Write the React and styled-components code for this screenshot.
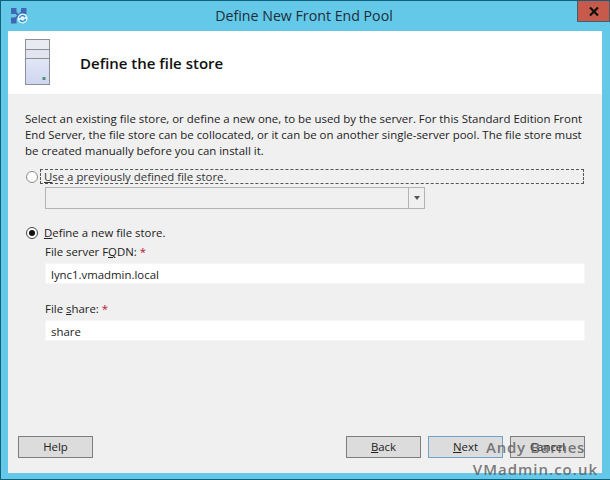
import React from "react";
import styled, { createGlobalStyle } from "styled-components";

const Global = createGlobalStyle`
  html, body { margin: 0; padding: 0; width: 610px; height: 480px; overflow: hidden; background: #64c8e8; }
  * { box-sizing: border-box; }
`;

const Win = styled.div`
  position: relative;
  width: 610px;
  height: 480px;
  background: #64c8e8;
  border: 1px solid #0f5f7d;
  border-right: 0;
  display: flex;
  flex-direction: column;
  font-family: "Open Sans", "Noto Sans", sans-serif;
  font-size: 11.4px;
  color: #222;
`;

const TitleBar = styled.div`
  height: 30px;
  flex: none;
  display: flex;
  align-items: flex-start;
  padding-left: 9px;
`;

const TitleIconBox = styled.div`
  width: 18px;
  height: 17px;
  margin-top: 6px;
  flex: none;
`;

const Title = styled.div`
  flex: 1;
  text-align: center;
  font-size: 14.2px;
  line-height: 30px;
  color: #1c2e38;
  padding-left: 3px;
`;

const Close = styled.div`
  width: 33px;
  height: 21px;
  flex: none;
  background: #c75a4a;
  border: 1px solid #3f5e6e;
  border-top: 0;
  display: flex;
  align-items: center;
  justify-content: center;
`;

const Client = styled.div`
  flex: 1;
  margin: 0 8px 6px 7px;
  display: flex;
  flex-direction: column;
  background: #f0f0f0;
  min-height: 0;
`;

const Header = styled.div`
  height: 63px;
  flex: none;
  background: #fff;
  display: flex;
  align-items: center;
  padding-left: 17px;
`;

const HeaderIcon = styled.div`
  width: 25px;
  height: 46px;
  flex: none;
  margin-top: -2px;
`;

const Heading = styled.h1`
  margin: 0 0 0 30px;
  font-size: 15px;
  font-weight: 600;
  color: #111;
`;

const Body = styled.div`
  flex: 1;
  padding: 17px 18px 0 18px;
  display: flex;
  flex-direction: column;
  min-height: 0;
`;

const Intro = styled.p`
  margin: 0 0 0 -1px;
  line-height: 16px;
  height: 48px;
  white-space: pre;
  font-size: 11.45px;
  color: #222;
`;

const RadioRow = styled.div`
  display: flex;
  align-items: center;
  height: 15px;
  flex: none;
  margin-top: ${(p) => p.$top}px;
`;

const Radio = styled.span`
  width: 12px;
  height: 12px;
  flex: none;
  border-radius: 50%;
  background: #fff;
  border: 1px solid ${(p) => (p.$on ? "#444" : "#8a8a8a")};
  display: flex;
  align-items: center;
  justify-content: center;
  &::after {
    content: "";
    display: ${(p) => (p.$on ? "block" : "none")};
    width: 6px;
    height: 6px;
    border-radius: 50%;
    background: #111;
  }
`;

const RadioLabel = styled.span`
  flex: ${(p) => (p.$focus ? "1" : "none")};
  margin-left: 2px;
  padding-left: 3px;
  line-height: 13px;
  height: 15px;
  border: 1px dashed ${(p) => (p.$focus ? "#555" : "transparent")};
  color: ${(p) => (p.$focus ? "#333" : "#222")};
`;

const Combo = styled.div`
  margin: 3px 0 0 19px;
  width: 380px;
  height: 22px;
  flex: none;
  display: flex;
  border: 1px solid #b4b4b4;
  background: #f0f0f0;
`;

const ComboField = styled.div`
  flex: 1;
`;

const ComboButton = styled.div`
  width: 16px;
  flex: none;
  border-left: 1px solid #b4b4b4;
  display: flex;
  align-items: center;
  justify-content: center;
  &::after {
    content: "";
    border-left: 3.5px solid transparent;
    border-right: 3.5px solid transparent;
    border-top: 4px solid #555;
  }
`;

const FieldLabel = styled.div`
  margin: ${(p) => p.$top}px 0 0 19px;
  height: 15px;
  flex: none;
  line-height: 15px;
  color: #222;
`;

const Req = styled.span`
  color: #b02030;
`;

const TextField = styled.div`
  margin: ${(p) => p.$top}px 0 0 19px;
  width: 540px;
  height: 21px;
  flex: none;
  background: #fff;
  border: 1px solid #f6f6f6;
  line-height: 21px;
  padding-left: 5px;
  color: #222;
`;

const Footer = styled.div`
  margin-top: auto;
  margin-bottom: 15px;
  display: flex;
  margin-left: -8px;
`;

const Btn = styled.div`
  width: 75px;
  height: 22px;
  flex: none;
  margin-left: ${(p) => p.$left || 0}px;
  background: #dcdcdc;
  border: 1px solid ${(p) => (p.$primary ? "#6da4c8" : "#7e7e7e")};
  text-align: center;
  line-height: 20px;
  color: #222;
`;

const Mark = styled.div`
  position: absolute;
  right: ${(p) => p.$right}px;
  top: ${(p) => p.$top}px;
  font-weight: 600;
  font-size: 15px;
  letter-spacing: ${(p) => p.$spacing}px;
  line-height: 18px;
  color: rgba(90, 90, 90, 0.8);
  white-space: nowrap;
`;

const introText = `Select an existing file store, or define a new one, to be used by the server. For this Standard Edition Front
End Server, the file store can be collocated, or it can be on another single-server pool. The file store must
be created manually before you can install it.`;

const App = () => (
  <>
    <Global />
    <Win>
      <TitleBar>
        <TitleIconBox>
          <svg width="18" height="17" viewBox="0 0 18 17">
            <rect x="1" y="1" width="5.5" height="6" fill="#3f68b4" />
            <rect x="11" y="1" width="5.5" height="6" fill="#3f68b4" />
            <rect x="1" y="10.5" width="5.5" height="6" fill="#3f68b4" />
            <path d="M5 5 L12 12 M12 5 L5 12" stroke="#3f68b4" strokeWidth="1.8" />
            <circle cx="12.5" cy="11.5" r="5" fill="#e6f6fc" />
            <path d="M9.5 11a3 3 0 0 1 5.5-1M15.5 12a3 3 0 0 1-5.5 1" fill="none" stroke="#2b8fd0" strokeWidth="1.5" />
          </svg>
        </TitleIconBox>
        <Title>Define New Front End Pool</Title>
        <Close>
          <svg width="10" height="9" viewBox="0 0 10 9">
            <path d="M1 0.5 L9 8.5 M9 0.5 L1 8.5" stroke="#111" strokeWidth="2.2" />
          </svg>
        </Close>
      </TitleBar>
      <Client>
        <Header>
          <HeaderIcon>
            <svg width="25" height="46" viewBox="0 0 25 46">
              <defs>
                <linearGradient id="caseFill" x1="0" y1="0" x2="0" y2="1">
                  <stop offset="0" stopColor="#f2f4fc" />
                  <stop offset="1" stopColor="#cdd5f0" />
                </linearGradient>
              </defs>
              <rect x="0.5" y="0.5" width="24" height="45" fill="url(#caseFill)" stroke="#8a8f98" />
              <rect x="1" y="1" width="23" height="9" fill="#e9ebf2" />
              <rect x="1" y="11" width="23" height="8" fill="#e2e5f0" />
              <path d="M1 10.5H24M1 19.5H24" stroke="#8a8f98" />
              <rect x="17.5" y="38" width="3" height="3" fill="#4f9478" />
            </svg>
          </HeaderIcon>
          <Heading>Define the file store</Heading>
        </Header>
        <Body>
          <Intro>{introText}</Intro>
          <RadioRow $top={10}>
            <Radio />
            <RadioLabel $focus>
              <u>U</u>se a previously defined file store.
            </RadioLabel>
          </RadioRow>
          <Combo>
            <ComboField />
            <ComboButton />
          </Combo>
          <RadioRow $top={16}>
            <Radio $on />
            <RadioLabel>
              <u>D</u>efine a new file store.
            </RadioLabel>
          </RadioRow>
          <FieldLabel $top={4}>
            File server F<u>Q</u>DN: <Req>*</Req>
          </FieldLabel>
          <TextField $top={4}>lync1.vmadmin.local</TextField>
          <FieldLabel $top={17}>
            File <u>s</u>hare: <Req>*</Req>
          </FieldLabel>
          <TextField $top={4}>share</TextField>
          <Footer>
            <Btn>Help</Btn>
            <Btn $left={253}>
              <u>B</u>ack
            </Btn>
            <Btn $left={7} $primary>
              <u>N</u>ext
            </Btn>
            <Btn $left={7}>Cancel</Btn>
          </Footer>
        </Body>
      </Client>
      <Mark $right={25} $top={437} $spacing={0.7}>Andy Barnes</Mark>
      <Mark $right={12} $top={459} $spacing={1}>VMadmin.co.uk</Mark>
    </Win>
  </>
);

export default App;
